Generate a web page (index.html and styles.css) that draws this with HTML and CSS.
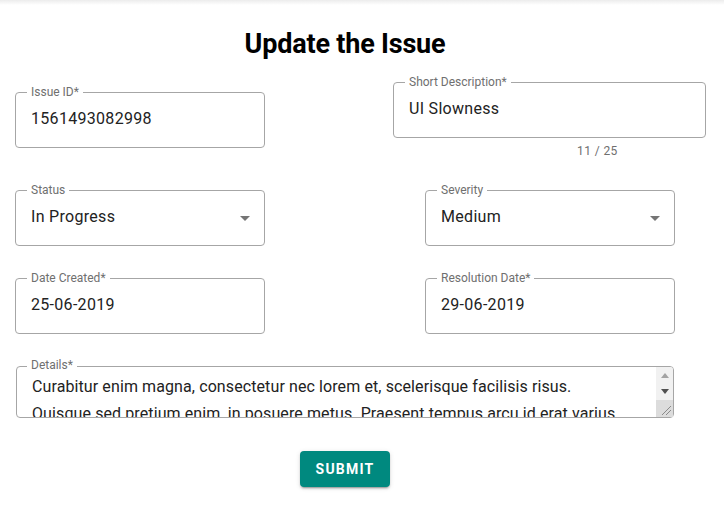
FILE: index.html
```html
<!DOCTYPE html>
<html>
<head>
<meta charset="utf-8">
<link rel="stylesheet" href="styles.css">
</head>
<body>
<div class="topbar"></div>
<div class="page">
<h1 class="title">Update the Issue</h1>
<form class="form">
  <div class="row row-first">
    <div class="field field-left field-low">
      <span class="label">Issue ID*</span>
      <span class="value">1561493082998</span>
    </div>
    <div class="field-wrap field-desc">
      <div class="field">
        <span class="label">Short Description*</span>
        <span class="value">UI Slowness</span>
      </div>
      <div class="counter">11 / 25</div>
    </div>
  </div>
  <div class="row">
    <div class="field field-left select">
      <span class="label">Status</span>
      <span class="value">In Progress</span>
      <span class="arrow"></span>
    </div>
    <div class="field field-right select">
      <span class="label">Severity</span>
      <span class="value">Medium</span>
      <span class="arrow"></span>
    </div>
  </div>
  <div class="row">
    <div class="field field-left">
      <span class="label">Date Created*</span>
      <span class="value">25-06-2019</span>
    </div>
    <div class="field field-right">
      <span class="label">Resolution Date*</span>
      <span class="value">29-06-2019</span>
    </div>
  </div>
  <div class="details">
    <span class="label">Details*</span>
    <textarea class="details-text">Curabitur enim magna, consectetur nec lorem et, scelerisque facilisis risus. Quisque sed pretium enim, in posuere metus. Praesent tempus arcu id erat varius feugiat. Nulla facilisi. Donec vel ipsum sit amet nisi dapibus tincidunt.</textarea>
    <div class="scrollbar">
      <div class="sb-btn">
        <svg width="8" height="5" viewBox="0 0 8 5"><path d="M0 5 L4 0 L8 5 Z" fill="#a3a3a3"/></svg>
      </div>
      <div class="sb-btn">
        <svg width="8" height="5" viewBox="0 0 8 5"><path d="M0 0 L8 0 L4 5 Z" fill="#505050"/></svg>
      </div>
      <div class="sb-corner">
        <svg width="17" height="17" viewBox="0 0 17 17"><path d="M6 15 L15 6 M10 15 L15 10" stroke="#8a8a8a" stroke-width="1"/></svg>
      </div>
    </div>
  </div>
  <div class="actions">
    <button type="button" class="submit">Submit</button>
  </div>
</form>
</div>
</body>
</html>
```
FILE: styles.css
```css
* { box-sizing: border-box; }
html, body { margin: 0; padding: 0; background: #fff; }
body {
  font-family: Roboto, "Liberation Sans", sans-serif;
  color: rgba(0,0,0,0.87);
  width: 724px;
  height: 517px;
  overflow: hidden;
}
.topbar {
  height: 5px;
  background: linear-gradient(#ececec, #ffffff);
}
.page {
  width: 690px;
}
.title {
  margin: 23px 0 0 0;
  text-align: center;
  font-size: 27px;
  font-weight: 700;
  line-height: 32px;
  color: #000;
  letter-spacing: -0.2px;
}
.form {
  padding: 0 0 0 15px;
}
.row {
  display: flex;
  margin-top: 32px;
}
.row-first {
  margin-top: 22px;
  align-items: flex-start;
}
.field {
  position: relative;
  height: 56px;
  border: 1px solid #a6a6a6;
  border-radius: 4px;
  display: flex;
  align-items: center;
  padding: 0 15px 3px 15px;
  flex-shrink: 0;
}
.field-left { width: 250px; }
.field-low { margin-top: 10px; }
.field-right { width: 250px; margin-left: 160px; }
.field-desc { width: 313px; margin-left: 128px; flex-shrink: 0; }
.label {
  position: absolute;
  top: -8px;
  left: 11px;
  padding: 0 4px;
  background: #fff;
  font-size: 12px;
  line-height: 14px;
  color: #6f6f6f;
}
.value {
  font-size: 16px;
  color: #222;
  letter-spacing: 0.3px;
}
.counter {
  font-size: 12px;
  color: #6f6f6f;
  margin: 6px 0 0 184px;
  letter-spacing: 0.4px;
}
.arrow {
  position: absolute;
  right: 14px;
  top: 25px;
  width: 0;
  height: 0;
  border-left: 5px solid transparent;
  border-right: 5px solid transparent;
  border-top: 5px solid #757575;
}
.details {
  position: relative;
  margin: 32px 0 0 1px;
  width: 658px;
}
.details-text {
  display: block;
  width: 658px;
  height: 52px;
  border: 1px solid #a6a6a6;
  border-radius: 4px;
  padding: 6px 42px 0 15px;
  font-family: Roboto, "Liberation Sans", sans-serif;
  font-size: 16px;
  line-height: 27px;
  letter-spacing: 0.1px;
  color: #222;
  overflow: hidden;
  resize: none;
  outline: none;
}
.scrollbar {
  position: absolute;
  top: 1px;
  right: 1px;
  width: 17px;
  height: 50px;
  display: flex;
  flex-direction: column;
  background: #f1f1f1;
  border-top-right-radius: 3px;
}
.sb-btn {
  height: 16px;
  display: flex;
  align-items: center;
  justify-content: center;
}
.sb-btn + .sb-btn { height: 17px; }
.sb-corner {
  height: 17px;
  background: #dcdcdc;
}
.sb-corner svg { display: block; }
.actions {
  display: flex;
  justify-content: center;
  margin: 33px 0 0 -15px;
}
.submit {
  width: 90px;
  height: 36px;
  border: none;
  border-radius: 4px;
  background: #00897f;
  color: #fff;
  font-family: Roboto, "Liberation Sans", sans-serif;
  font-size: 14px;
  font-weight: 700;
  letter-spacing: 1.2px;
  text-transform: uppercase;
  box-shadow: 0 3px 1px -2px rgba(0,0,0,0.2), 0 2px 2px 0 rgba(0,0,0,0.14), 0 1px 5px 0 rgba(0,0,0,0.12);
}
```
